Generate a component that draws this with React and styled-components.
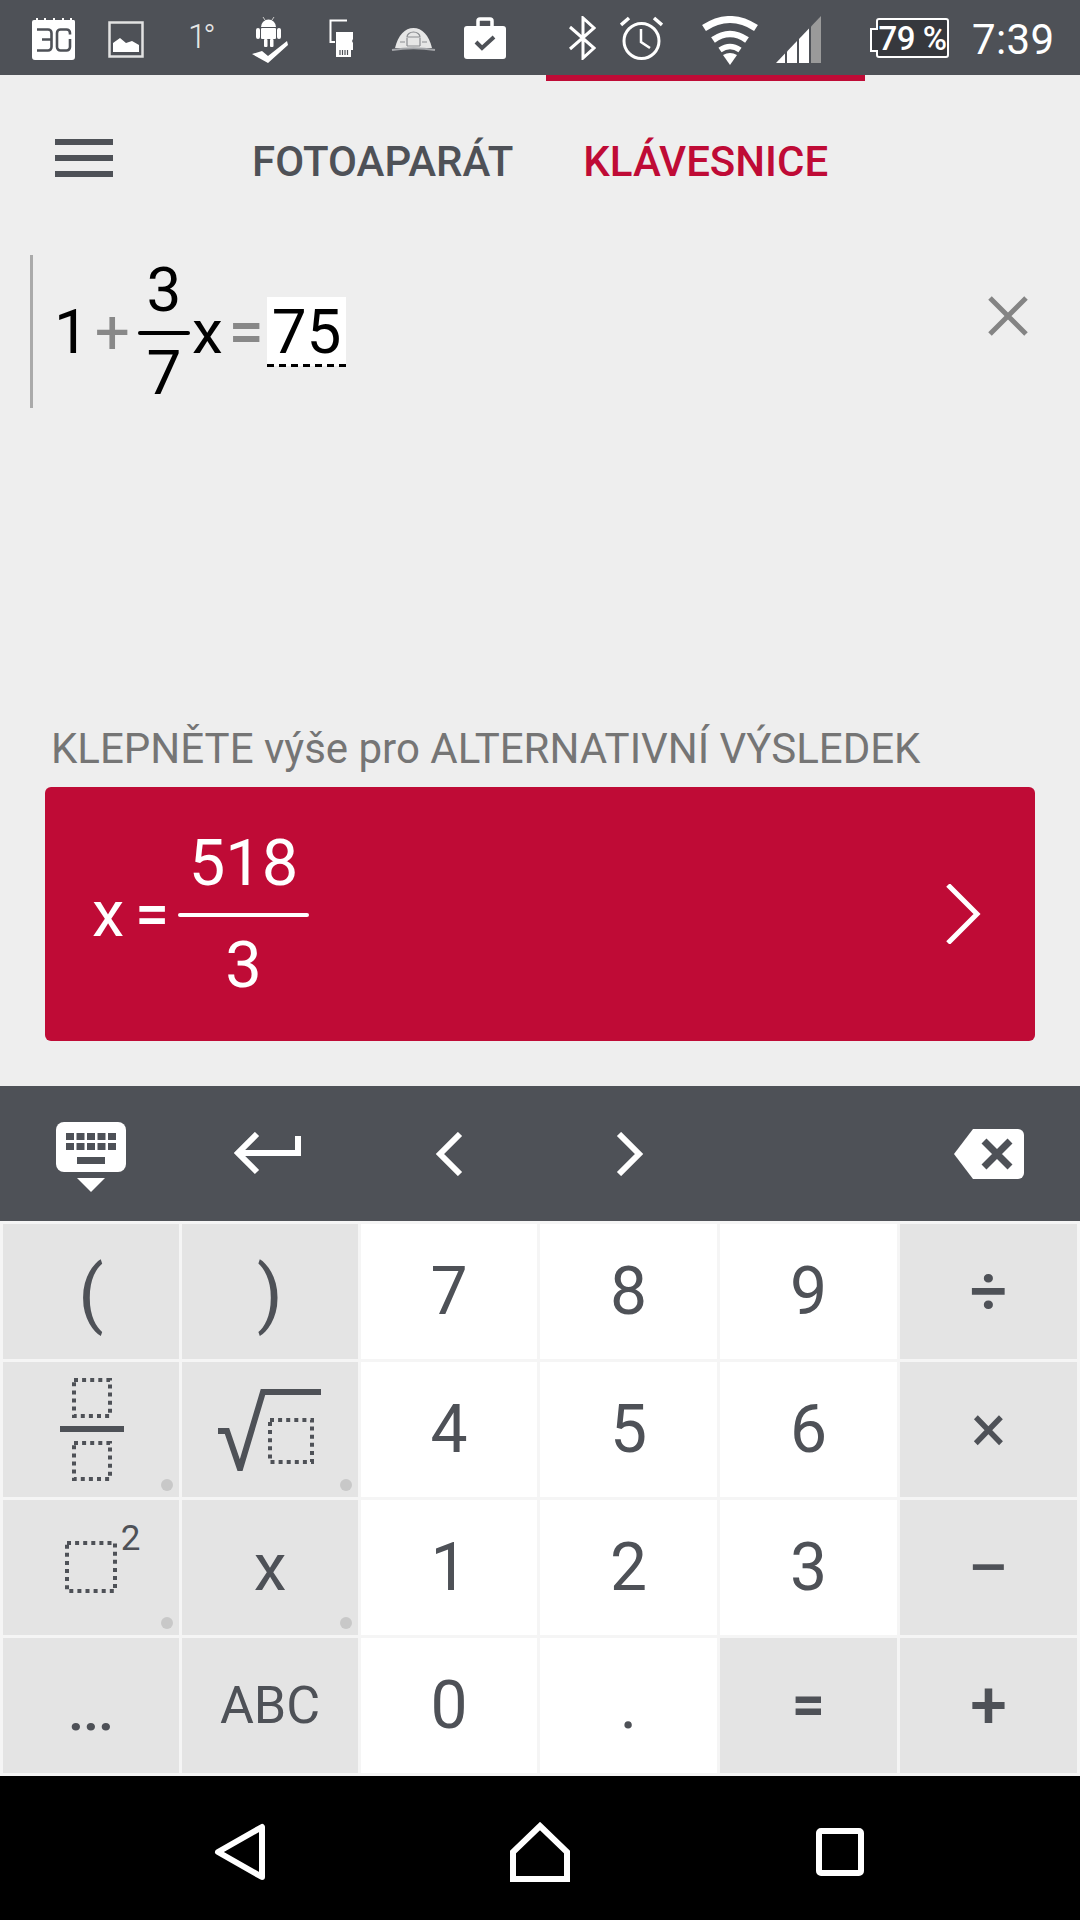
import styled, { createGlobalStyle } from "styled-components";

const SLATE = "#4e5157";
const RED = "#bf0b36";
const COLUMNS = "176px 176px 176px 177px 177px 177px";

const GlobalStyle = createGlobalStyle`
  html, body {
    margin: 0;
    padding: 0;
    background: #000;
    font-family: Roboto, "Liberation Sans", sans-serif;
  }
`;

const Page = styled.div`
  width: 1080px;
  height: 1920px;
  display: flex;
  flex-direction: column;
  overflow: hidden;
  background: #eeeeee;
`;

/* status bar */
const StatusBar = styled.div`
  height: 75px;
  flex: none;
  display: flex;
  align-items: flex-start;
  background: ${SLATE};
  color: #fff;
`;

const StatusIcon = styled.svg`
  flex: none;
  display: block;
  margin-left: ${(p) => p.$ml}px;
  margin-top: ${(p) => p.$mt}px;
`;

const Degrees = styled.span`
  margin-left: 44px;
  margin-top: 19px;
  width: 30px;
  font-size: 33px;
  line-height: 36px;
  font-weight: 300;
  letter-spacing: -3px;
  color: #e6e6e6;
`;

const Battery = styled.div`
  position: relative;
  margin-left: 54px;
  margin-top: 18px;
  width: 73px;
  height: 40px;
  box-sizing: border-box;
  display: flex;
  align-items: center;
  justify-content: center;
  background: #36383d;
  border: 2px solid #fff;
  border-radius: 3px;
  font-size: 33px;
  font-weight: 500;
  letter-spacing: -0.5px;

  &::before {
    content: "";
    position: absolute;
    left: -8px;
    top: 8px;
    width: 6px;
    height: 20px;
    border: 2px solid #fff;
    border-right: none;
    background: #36383d;
  }
`;

const Clock = styled.span`
  margin-left: 23px;
  margin-top: 15px;
  font-size: 42px;
  line-height: 50px;
  letter-spacing: 0.4px;
`;

/* tabs */
const Header = styled.div`
  height: 180px;
  flex: none;
  display: flex;
  align-items: flex-start;
`;

const Burger = styled.div`
  width: 58px;
  margin: 64px 0 0 55px;
  display: flex;
  flex-direction: column;
  gap: 10px;
`;

const BurgerBar = styled.span`
  display: block;
  height: 6px;
  background: ${SLATE};
`;

const Tab = styled.div`
  box-sizing: border-box;
  height: 120px;
  padding: 58px ${(p) => p.$pad}px 0;
  margin-left: ${(p) => p.$ml}px;
  border-top: 6px solid ${(p) => (p.$active ? RED : "transparent")};
  color: ${(p) => (p.$active ? RED : SLATE)};
  font-size: 42px;
  line-height: 46px;
  font-weight: 500;
`;

/* editor */
const Editor = styled.div`
  height: 153px;
  flex: none;
  margin-left: 30px;
  padding-left: 21px;
  border-left: 3px solid #aaaaaa;
  display: flex;
  align-items: center;
  color: #000;
  font-size: 62px;
  line-height: 62px;
`;

const Op = styled.span`
  color: #888888;
  font-weight: ${(p) => p.$weight};
  font-size: 62px;
  margin: ${(p) => p.$m};
`;

const Frac = styled.div`
  display: flex;
  flex-direction: column;
  align-items: center;
  flex: none;
  width: ${(p) => p.$w}px;
  margin-right: ${(p) => p.$mr || 0}px;
`;

const FracBar = styled.div`
  align-self: stretch;
  height: 4px;
  border-radius: 2px;
  background: ${(p) => p.$color};
  margin: ${(p) => p.$m};
`;

const Answer = styled.span`
  position: relative;
  margin-left: 3px;
  padding: 0 5px;
  height: 69px;
  display: flex;
  align-items: center;
  background: #fff;

  &::after {
    content: "";
    position: absolute;
    left: 0;
    right: 0;
    bottom: -1px;
    height: 3px;
    background: repeating-linear-gradient(90deg, #000 0 7px, transparent 7px 12px);
  }
`;

const ClearIcon = styled.svg`
  margin-left: auto;
  margin-right: 52px;
  margin-top: -32px;
  flex: none;
`;

const EditorWrap = styled.div`
  flex: none;
  height: 471px;
`;

/* result */
const Hint = styled.div`
  height: 46px;
  flex: none;
  margin-left: 51px;
  color: #757575;
  font-size: 42px;
  line-height: 46px;
`;

const ResultCard = styled.div`
  flex: none;
  height: 254px;
  margin: 15px 45px 0;
  padding: 0 54px 0 47px;
  display: flex;
  align-items: center;
  border-radius: 6px;
  background: ${RED};
  color: #fff;
  font-size: 65px;
  line-height: 64px;
`;

const ResultEq = styled.span`
  font-weight: 500;
  font-size: 60px;
  margin: 0 9px 0 11px;
`;

const ChevronSlot = styled.svg`
  margin-left: auto;
  flex: none;
`;

/* keyboard */
const Toolbar = styled.div`
  height: 135px;
  flex: none;
  margin-top: 45px;
  padding: 0 3px;
  display: grid;
  grid-template-columns: ${COLUMNS};
  gap: 3px;
  align-items: center;
  justify-items: center;
  background: ${SLATE};
`;

const ToolIcon = styled.svg`
  display: block;
  margin-left: ${(p) => p.$ml || 0}px;
  margin-top: ${(p) => p.$mt || 0}px;
`;

const Keys = styled.div`
  flex: none;
  height: 555px;
  box-sizing: border-box;
  padding: 3px;
  display: grid;
  grid-template-columns: ${COLUMNS};
  grid-auto-rows: 135px;
  gap: 3px;
  background: #f5f5f5;
`;

const Key = styled.div`
  position: relative;
  display: flex;
  align-items: center;
  justify-content: center;
  box-sizing: border-box;
  padding-top: ${(p) => p.$shift || 0}px;
  padding-bottom: ${(p) => p.$lift || 0}px;
  background: ${(p) => (p.$tone === "gray" ? "#e4e4e4" : "#fff")};
  color: ${SLATE};
  font-size: ${(p) => p.$size || 66}px;
  font-weight: ${(p) => p.$weight || 400};
  line-height: 1;
`;

const MoreDot = styled.span`
  position: absolute;
  right: 6px;
  bottom: 6px;
  width: 12px;
  height: 12px;
  border-radius: 50%;
  background: #c8c8c8;
`;

const PowerKey = styled.div`
  display: flex;
  align-items: flex-start;
  margin-left: 23px;
`;

const Sup = styled.span`
  font-size: 35px;
  line-height: 35px;
  margin: -20px 0 0 2px;
  font-weight: 400;
`;

/* nav */
const NavBar = styled.div`
  flex: 1;
  display: flex;
  align-items: center;
  justify-content: center;
  gap: 240px;
  padding-top: 7px;
  background: #000;
`;

const NavSlot = styled.svg`
  flex: none;
  display: block;
`;

const DashedBox = ({ size, step = 4 }) => (
  <rect x="2" y="2" width={size} height={size} fill="none" stroke={SLATE} strokeWidth="4" strokeDasharray={`${step} ${step + 0.1}`} />
);

const keys = [
  { label: "(", tone: "gray", size: 74, shift: 4 },
  { label: ")", tone: "gray", size: 74, shift: 4 },
  { label: "7" },
  { label: "8" },
  { label: "9" },
  { label: "÷", tone: "gray", size: 66, weight: 500 },
  { icon: "frac", tone: "gray", dot: true },
  { icon: "root", tone: "gray", dot: true },
  { label: "4" },
  { label: "5" },
  { label: "6" },
  { label: "×", tone: "gray", size: 66 },
  { icon: "power", tone: "gray", dot: true },
  { label: "x", tone: "gray", dot: true },
  { label: "1" },
  { label: "2" },
  { label: "3" },
  { label: "−", tone: "gray", size: 76 },
  { label: "...", tone: "gray", size: 52, weight: 700, shift: 14 },
  { label: "ABC", tone: "gray", size: 52 },
  { label: "0" },
  { label: "." },
  { label: "=", tone: "gray", size: 58, weight: 700, lift: 4 },
  { label: "+", tone: "gray", size: 66, weight: 500 },
];

const KeyIcon = ({ name }) => {
  if (name === "frac") {
    return (
      <ToolIcon $ml={2} width="64" height="104" viewBox="0 0 64 104">
        <g transform="translate(12 0)"><DashedBox size={36} /></g>
        <rect x="0" y="48" width="64" height="6" fill={SLATE} />
        <g transform="translate(12 63)"><DashedBox size={36} /></g>
      </ToolIcon>
    );
  }
  if (name === "root") {
    return (
      <svg width="104" height="82" viewBox="0 0 104 82">
        <path d="M0 42H9L22 80L45 3H103" fill="none" stroke={SLATE} strokeWidth="6" />
        <g transform="translate(50 29)"><DashedBox size={42} /></g>
      </svg>
    );
  }
  return (
    <PowerKey>
      <svg width="54" height="54" viewBox="0 0 54 54">
        <DashedBox size={48} />
      </svg>
      <Sup>2</Sup>
    </PowerKey>
  );
};

export default function App() {
  return (
    <Page>
      <GlobalStyle />
      <StatusBar>
        {/* calendar */}
        <StatusIcon $ml={32} $mt={17} width="44" height="43" viewBox="0 0 44 43">
          <path d="M2 3h2V1h2v2h6V1h2v2h7V1h2v2h7V1h2v2h6V1h2v2h2a2 2 0 0 1 1 2v35a3 3 0 0 1-3 3H3a3 3 0 0 1-3-3V5a2 2 0 0 1 2-2z" fill="#fff" />
          <g fill="none" stroke={SLATE} strokeWidth="2.600">
            <path d="M5 12.500H16a3.500 3.500 0 0 1 3.500 3.500V30a3.500 3.500 0 0 1-3.500 3.500H5M10 22.500H19" />
            <path d="M38 17.500V16a3.500 3.500 0 0 0-3.500-3.500H28.500a3.500 3.500 0 0 0-3.500 3.500V30a3.500 3.500 0 0 0 3.500 3.500H34.500a3.500 3.500 0 0 0 3.500-3.500V22" />
          </g>
        </StatusIcon>
        {/* picture */}
        <StatusIcon $ml={32} $mt={21} width="36" height="37" viewBox="0 0 36 37">
          <rect x="1.500" y="1.500" width="33" height="34" fill="none" stroke="#e2e2e2" strokeWidth="2.500" />
          <path d="M5 31V22L12 17L18 22L24 20L31 24V31z" fill="#fff" />
        </StatusIcon>
        <Degrees>1°</Degrees>
        {/* android with check */}
        <StatusIcon $ml={34} $mt={16} width="37" height="47" viewBox="0 0 37 47">
          <path d="M11 1l2 3M22 1l-2 3" stroke="#ccc" strokeWidth="1" />
          <path d="M9 11a7.500 7.500 0 0 1 15 0z" fill="#fff" />
          <rect x="9" y="12" width="15" height="11" rx="1" fill="#fff" />
          <rect x="4" y="12" width="4" height="11" rx="2" fill="#fff" />
          <rect x="25" y="12" width="4" height="11" rx="2" fill="#fff" />
          <rect x="12" y="23" width="3.500" height="8" rx="1" fill="#fff" />
          <rect x="18" y="23" width="3.500" height="8" rx="1" fill="#fff" />
          <path d="M0 38L10 35L16 40L35 25L36 29L16 47z" fill="#fff" />
        </StatusIcon>
        {/* sd card */}
        <StatusIcon $ml={40} $mt={19} width="25" height="38" viewBox="0 0 25 38">
          <path d="M18 1.500H1.500V23H6" fill="none" stroke="#fff" strokeWidth="2" />
          <path d="M7 13H24V20L23 22L24 24V31H22V38H7z" fill="#fff" />
          <path d="M11 31v5M13.500 31v5M16 31v5M18.500 31v5" stroke={SLATE} strokeWidth="1.200" />
        </StatusIcon>
        {/* dome */}
        <StatusIcon $ml={37} $mt={27} width="45" height="25" viewBox="0 0 45 25">
          <path d="M4 21C7 8 14 1 22.500 1S38 8 41 21z" fill="#e6e6e6" />
          <g fill="none" stroke="#8a8c90" strokeWidth="1.200">
            <path d="M16 10a6.500 5 0 0 1 13 0zM16 11v8M29 11v8M16 19H29M9 15H14M31 15H36" />
          </g>
          <path d="M1 23C14 21 31 21 44 23" fill="none" stroke="#a4a6aa" strokeWidth="2" />
        </StatusIcon>
        {/* briefcase */}
        <StatusIcon $ml={28} $mt={17} width="42" height="42" viewBox="0 0 42 42">
          <path d="M14 9V4a2 2 0 0 1 2-2h10a2 2 0 0 1 2 2v5" fill="none" stroke="#fff" strokeWidth="3.500" />
          <rect x="0" y="9" width="42" height="33" rx="3" fill="#fff" />
          <path d="M12 25l6 6 12-11" fill="none" stroke={SLATE} strokeWidth="4" />
        </StatusIcon>
        {/* bluetooth */}
        <StatusIcon $ml={63} $mt={16} width="27" height="44" viewBox="0 0 27 44">
          <path d="M1 11L25 32L14 42V2L25 12L1 33" fill="none" stroke="#fff" strokeWidth="3" />
        </StatusIcon>
        {/* alarm */}
        <StatusIcon $ml={24} $mt={16} width="43" height="44" viewBox="0 0 43 44">
          <circle cx="21.500" cy="25" r="17.500" fill="none" stroke="#fff" strokeWidth="3" />
          <path d="M21 13V26L30 32" fill="none" stroke="#fff" strokeWidth="2.500" />
          <path d="M1 9L9 2M42 9L34 2" stroke="#fff" strokeWidth="3.500" />
        </StatusIcon>
        {/* wifi */}
        <StatusIcon $ml={38} $mt={16} width="58" height="49" viewBox="0 0 58 49">
          <g fill="none" stroke="#fff">
            <path d="M3 12Q29 -5 55 12" strokeWidth="7" />
            <path d="M12 24Q29 12 46 24" strokeWidth="6.500" />
            <path d="M19 34Q29 27 39 34" strokeWidth="5.500" />
          </g>
          <path d="M22 39Q29 35 36 39L29 49z" fill="#fff" />
        </StatusIcon>
        {/* signal */}
        <StatusIcon $ml={17} $mt={16} width="46" height="47" viewBox="0 0 46 47">
          <path d="M0 47L9 37.600V47z" fill="#fff" />
          <path d="M11 35.500L21 25V47H11z" fill="#fff" />
          <path d="M23 23L33 12.500V47H23z" fill="#fff" />
          <path d="M35 10.500L45 0V47H35z" fill="#9a9a9a" />
        </StatusIcon>
        <Battery>79 %</Battery>
        <Clock>7:39</Clock>
      </StatusBar>

      <Header>
        <Burger>
          <BurgerBar />
          <BurgerBar />
          <BurgerBar />
        </Burger>
        <Tab $ml={108} $pad={31}>FOTOAPARÁT</Tab>
        <Tab $ml={2} $active $pad={37}>KLÁVESNICE</Tab>
      </Header>

      <EditorWrap>
        <Editor>
          <span>1</span>
          <Op $weight={400} $m="0 8px 0 6px">+</Op>
          <Frac $w={52} $mr={2}>
            <span>3</span>
            <FracBar $color="#000" $m="10px 0 7px" />
            <span>7</span>
          </Frac>
          <span>x</span>
          <Op $weight={500} $m="0 0 0 6px">=</Op>
          <Answer>75</Answer>
          <ClearIcon width="40" height="40" viewBox="0 0 40 40">
            <path d="M2 2L38 38M38 2L2 38" stroke="#848484" strokeWidth="5" />
          </ClearIcon>
        </Editor>
      </EditorWrap>

      <Hint>KLEPNĚTE výše pro ALTERNATIVNÍ VÝSLEDEK</Hint>

      <ResultCard>
        <span>x</span>
        <ResultEq>=</ResultEq>
        <Frac $w={131}>
          <span>518</span>
          <FracBar $color="#fff" $m="18px 0 16px" />
          <span>3</span>
        </Frac>
        <ChevronSlot width="36" height="60" viewBox="0 0 36 60">
          <path d="M3 1L32 30L3 59" fill="none" stroke="#fff" strokeWidth="5" />
        </ChevronSlot>
      </ResultCard>

      <Toolbar>
        <ToolIcon $mt={8} width="70" height="71" viewBox="0 0 70 71">
          <rect width="70" height="50" rx="8" fill="#fff" />
          <g fill={SLATE}>
            {[10, 20.500, 31, 41.500, 52].map((x) => (
              <g key={x}>
                <rect x={x} y="11" width="8" height="7" />
                <rect x={x} y="21" width="8" height="7" />
              </g>
            ))}
            <rect x="21" y="35" width="28" height="7" />
          </g>
          <path d="M21 56H49L35 70z" fill="#fff" />
        </ToolIcon>
        <ToolIcon $ml={-4} width="68" height="44" viewBox="0 0 68 44">
          <path d="M23 2L4 21L23 40M4 21H64V4" fill="none" stroke="#fff" strokeWidth="6" />
        </ToolIcon>
        <ToolIcon width="28" height="44" viewBox="0 0 28 44">
          <path d="M25 2L5 22L25 42" fill="none" stroke="#fff" strokeWidth="6" />
        </ToolIcon>
        <ToolIcon $ml={3} width="28" height="44" viewBox="0 0 28 44">
          <path d="M3 2L23 22L3 42" fill="none" stroke="#fff" strokeWidth="6" />
        </ToolIcon>
        <span />
        <ToolIcon width="70" height="50" viewBox="0 0 70 50">
          <path d="M19 0H64a6 6 0 0 1 6 6V44a6 6 0 0 1-6 6H19L0 25z" fill="#fff" />
          <path d="M30 12L56 38M56 12L30 38" stroke={SLATE} strokeWidth="7" />
        </ToolIcon>
      </Toolbar>

      <Keys>
        {keys.map((k, i) => (
          <Key key={i} $tone={k.tone} $size={k.size} $weight={k.weight} $shift={k.shift} $lift={k.lift}>
            {k.icon ? <KeyIcon name={k.icon} /> : k.label}
            {k.dot && <MoreDot />}
          </Key>
        ))}
      </Keys>

      <NavBar>
        <NavSlot width="60" height="60" viewBox="0 0 60 60">
          <path d="M52 5V55L8 30z" fill="none" stroke="#fff" strokeWidth="6" strokeLinejoin="round" />
        </NavSlot>
        <NavSlot width="60" height="60" viewBox="0 0 60 60">
          <path d="M30 4L57 30V57H3V30z" fill="none" stroke="#fff" strokeWidth="6" />
        </NavSlot>
        <NavSlot width="60" height="60" viewBox="0 0 60 60">
          <rect x="9" y="9" width="42" height="42" rx="2" fill="none" stroke="#fff" strokeWidth="6" />
        </NavSlot>
      </NavBar>
    </Page>
  );
}
